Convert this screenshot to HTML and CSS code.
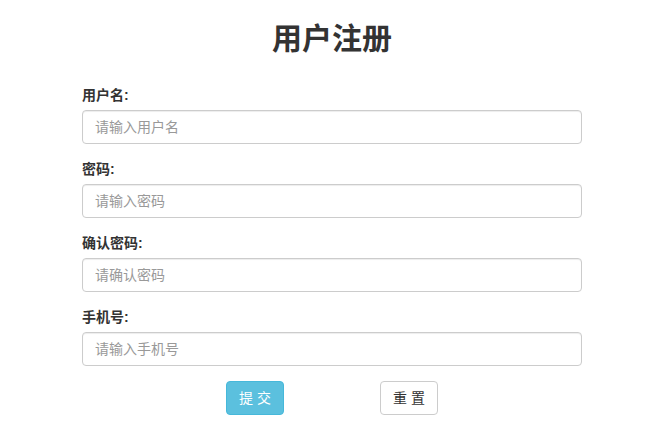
FILE: index.html
```html
<!DOCTYPE html>
<html lang="zh-CN">
<head>
<meta charset="utf-8">
<title>用户注册</title>
<link rel="stylesheet" href="styles.css">
</head>
<body>
<div class="page">
  <h2 class="title">用户注册</h2>
  <form class="form">
    <div class="form-group">
      <label class="label" for="u">用户名:</label>
      <input class="input" id="u" type="text" placeholder="请输入用户名">
    </div>
    <div class="form-group">
      <label class="label" for="p">密码:</label>
      <input class="input" id="p" type="password" placeholder="请输入密码">
    </div>
    <div class="form-group">
      <label class="label" for="p2">确认密码:</label>
      <input class="input" id="p2" type="password" placeholder="请确认密码">
    </div>
    <div class="form-group">
      <label class="label" for="m">手机号:</label>
      <input class="input" id="m" type="text" placeholder="请输入手机号">
    </div>
    <div class="actions">
      <button type="button" class="btn btn-info">提 交</button>
      <button type="reset" class="btn btn-default">重 置</button>
    </div>
  </form>
</div>
</body>
</html>
```
FILE: styles.css
```css
* { box-sizing: border-box; }
html, body { margin: 0; padding: 0; background: #fff; }
body {
  font-family: "Liberation Sans", "Noto Sans CJK SC", sans-serif;
  font-size: 14px;
  line-height: 20px;
  color: #333;
}
.page {
  width: 504px;
  margin: 0 auto;
  padding: 22px 0 0 4px;
}
.title {
  margin: 0 0 30px;
  font-size: 30px;
  line-height: 33px;
  font-weight: bold;
  text-align: center;
  color: #333;
}
.form { margin: 0; }
.form-group { margin-bottom: 15px; }
.label {
  display: block;
  margin-bottom: 5px;
  font-weight: bold;
  font-size: 14px;
  line-height: 20px;
}
.input {
  display: block;
  width: 100%;
  height: 34px;
  padding: 6px 12px;
  font-family: inherit;
  font-size: 14px;
  line-height: 20px;
  color: #555;
  background: #fff;
  border: 1px solid #ccc;
  border-radius: 4px;
  box-shadow: inset 0 1px 1px rgba(0,0,0,.075);
  outline: none;
}
.input::placeholder { color: #999; }
.actions {
  display: flex;
  justify-content: center;
  gap: 96px;
}
.btn {
  height: 34px;
  padding: 6px 12px;
  font-family: inherit;
  font-size: 14px;
  line-height: 20px;
  border: 1px solid transparent;
  border-radius: 4px;
  cursor: pointer;
}
.btn-info {
  color: #fff;
  background: #5bc0de;
  border-color: #46b8da;
}
.btn-default {
  color: #333;
  background: #fff;
  border-color: #ccc;
}
```
